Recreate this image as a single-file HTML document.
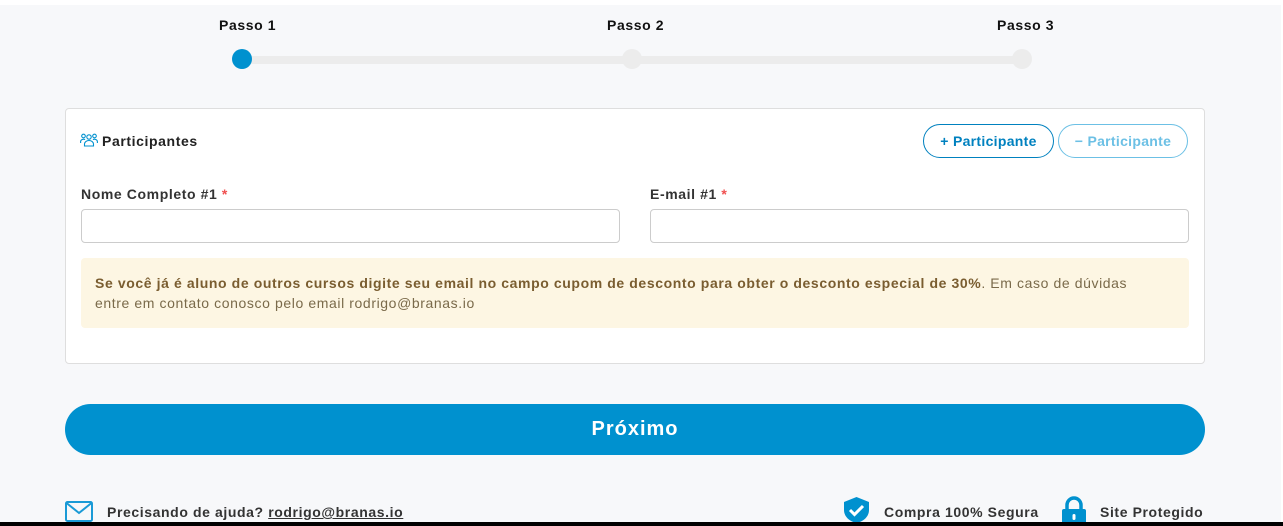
<!DOCTYPE html>
<html><head><meta charset="utf-8"><style>
*{box-sizing:border-box;margin:0;padding:0}
body{width:1283px;height:526px;overflow:hidden;background:#fff;font-family:"Liberation Sans",sans-serif;position:relative;letter-spacing:0.6px}
.bg{position:absolute;left:0;top:5px;width:1281px;height:521px;background:#f7f8fa}
.abs{position:absolute;white-space:nowrap}
.step{font-weight:bold;font-size:14px;color:#111}
.track{left:241px;top:56px;width:781px;height:8px;background:#ececec;border-radius:4px}
.dot{width:20px;height:20px;border-radius:50%;background:#ececec}
.card{left:65px;top:108px;width:1140px;height:256px;background:#fff;border:1px solid #dedede;border-radius:4px}
.lbl{font-weight:bold;font-size:14px;color:#333}
.inp{height:34px;border:1px solid #ccc;border-radius:4px;background:#fff}
.btn{height:34px;border-radius:17px;font-weight:bold;font-size:14px;display:flex;align-items:center;justify-content:center;background:#fff;letter-spacing:0.3px}
.note{left:81px;top:258px;width:1108px;height:70px;background:#fdf6e3;border-radius:4px;padding:15px 40px 15px 14px;font-size:14px;line-height:20px;color:#7a6a4a;white-space:normal}
.next{left:65px;top:404px;width:1140px;height:51px;background:#0091cf;border-radius:26px;color:#fff;font-weight:bold;font-size:20px;display:flex;align-items:center;justify-content:center;letter-spacing:1px}
.ft{font-weight:bold;font-size:14px;color:#333}
</style></head><body>
<div class="bg"></div>
<div class="abs step" style="left:219px;top:17px">Passo 1</div>
<div class="abs step" style="left:607px;top:17px">Passo 2</div>
<div class="abs step" style="left:997px;top:17px">Passo 3</div>
<div class="abs track"></div>
<div class="abs dot" style="left:232px;top:49px;background:#0091cf"></div>
<div class="abs dot" style="left:622px;top:49px"></div>
<div class="abs dot" style="left:1012px;top:49px"></div>
<div class="abs card"></div>
<svg class="abs" style="left:80px;top:133px" width="18" height="14" viewBox="0 0 18 14" fill="none" stroke="#0091cf" stroke-width="1.1"><circle cx="9" cy="4" r="2.2"/><circle cx="3.5" cy="3" r="1.8"/><circle cx="14.5" cy="3" r="1.8"/><path d="M4.5 13v-2a4.5 3.5 0 0 1 9 0v2z"/><path d="M0.6 10v-1.5a3 2.5 0 0 1 4.5-2M17.4 10v-1.5a3 2.5 0 0 0-4.5-2"/></svg>
<div class="abs lbl" style="left:102px;top:133px;color:#222">Participantes</div>
<div class="abs btn" style="left:923px;top:124px;width:131px;border:1px solid #0081bf;color:#0081bf">+ Participante</div>
<div class="abs btn" style="left:1058px;top:124px;width:130px;border:1px solid #6cc0e5;color:#6cc0e5">− Participante</div>
<div class="abs lbl" style="left:81px;top:186px">Nome Completo #1 <span style="color:#f05050">*</span></div>
<div class="abs lbl" style="left:650px;top:186px">E-mail #1 <span style="color:#f05050">*</span></div>
<div class="abs inp" style="left:81px;top:209px;width:539px"></div>
<div class="abs inp" style="left:650px;top:209px;width:539px"></div>
<div class="abs note"><b style="color:#7a5d30">Se você já é aluno de outros cursos digite seu email no campo cupom de desconto para obter o desconto especial de 30%</b>. Em caso de dúvidas entre em contato conosco pelo email rodrigo@branas.io</div>
<div class="abs next">Próximo</div>
<svg class="abs" style="left:65px;top:501px" width="28" height="21" viewBox="0 0 28 21" fill="none" stroke="#1a9ad6" stroke-width="2"><rect x="1" y="1" width="26" height="19" rx="1.5"/><path d="M1.5 2l12.5 10 12.5-10"/></svg>
<div class="abs ft" style="left:107px;top:504px">Precisando de ajuda? <span style="text-decoration:underline">rodrigo@branas.io</span></div>
<svg class="abs" style="left:843px;top:496px" width="27" height="28" viewBox="0 0 27 28"><path d="M13.5 1L26 6v8c0 7-6 11.5-12.5 13C7 25.5 1 21 1 14V6z" fill="#0091cf"/><path d="M7 14l4.5 4.5L20 10" stroke="#fff" stroke-width="3" fill="none"/></svg>
<div class="abs ft" style="left:884px;top:504px">Compra 100% Segura</div>
<svg class="abs" style="left:1061px;top:496px" width="26" height="30" viewBox="0 0 26 30"><path d="M6 13V9a7 7 0 0 1 14 0v4" stroke="#0091cf" stroke-width="3.5" fill="none"/><rect x="1" y="13" width="24" height="17" rx="2" fill="#0091cf"/><rect x="11.5" y="18" width="3" height="6" rx="1.5" fill="#fff"/></svg>
<div class="abs ft" style="left:1100px;top:504px">Site Protegido</div>
<div class="abs" style="left:0;top:522px;width:1283px;height:4px;background:#000"></div>
</body></html>
